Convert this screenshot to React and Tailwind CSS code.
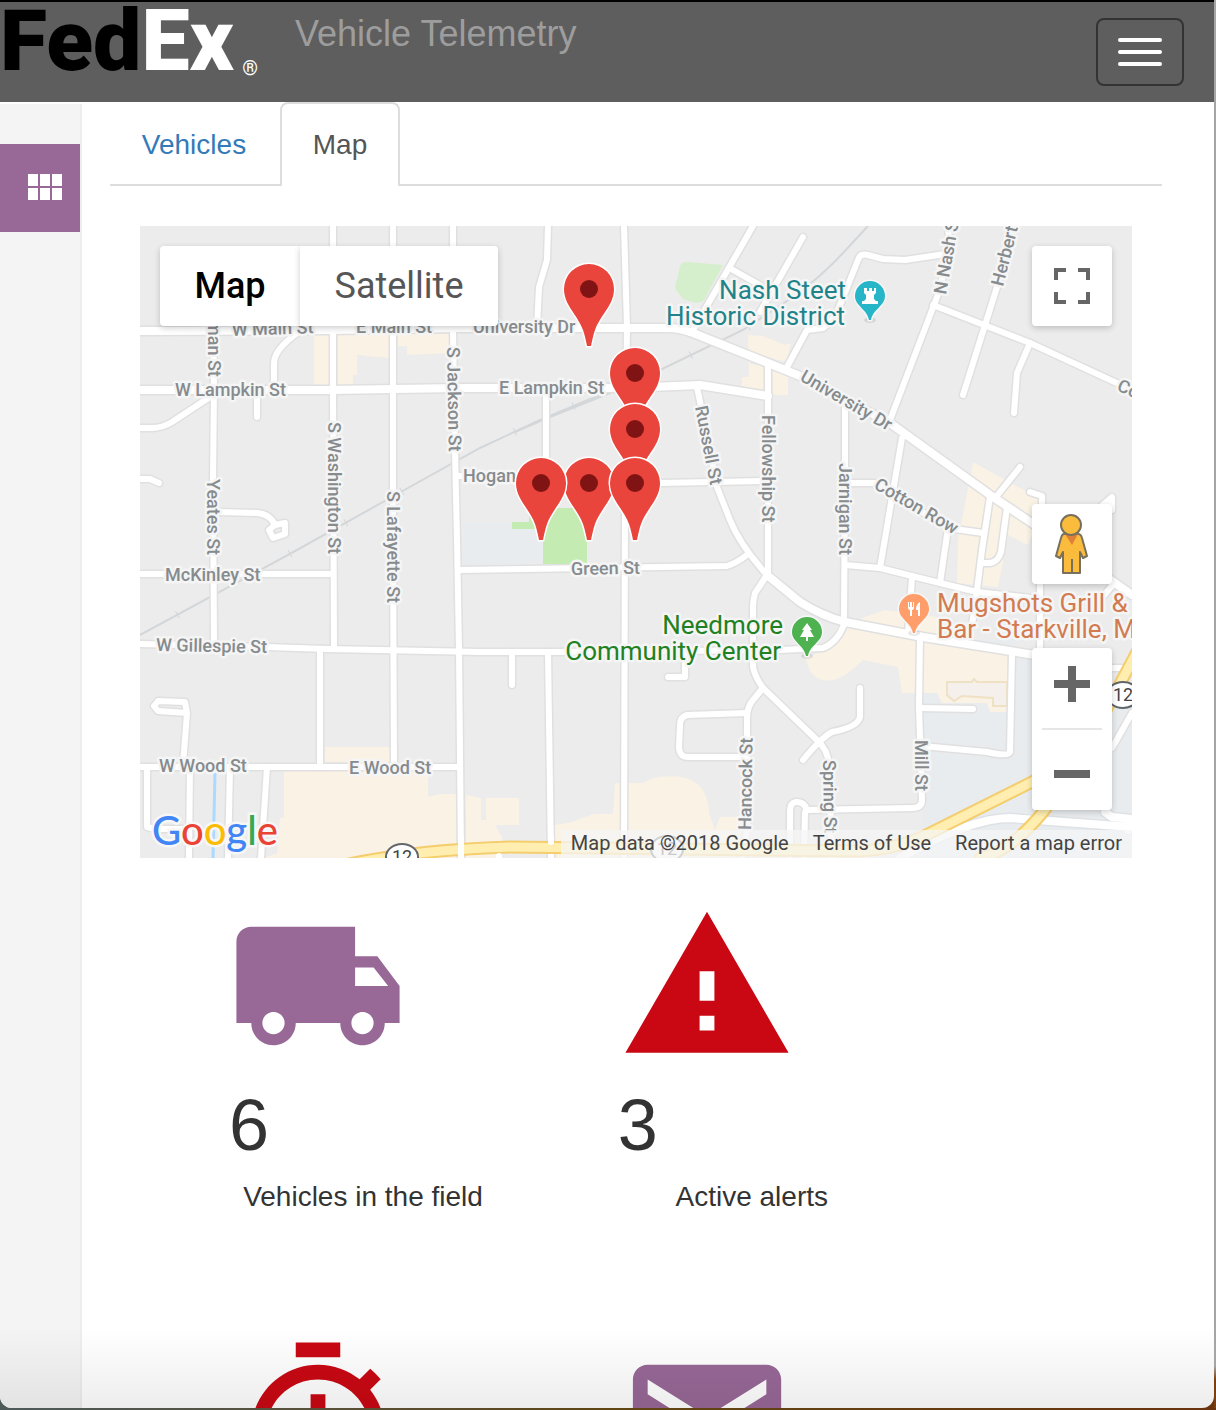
import React from "react";

const minorRoads = [
  "M140 428H152Q162 428 172 422L210 397",
  "M213 320L214 390L213 480L214 643",
  "M333 226V390L334 648",
  "M393 226V540L394 768",
  "M453 226V330L455 450L457 540L459 650L461 858",
  "M548 226L547 260L539 287L537 327",
  "M624 226L627 327L625 500L624 858",
  "M546 393V480",
  "M297 333Q274 350 274 363V388",
  "M257 398V417",
  "M140 479H150L159 483",
  "M218 512L257 513Q270 514 275 525L285 523V534L273 538L269 530L275 525",
  "M457 476H541",
  "M635 484L660 483L767 481",
  "M697 387L712 460L717 487L730 520Q740 545 767 575",
  "M768 363V575",
  "M753 226L693 330",
  "M733 270L763 287",
  "M803 237L760 312",
  "M787 367L807 330L823 328Q834 320 840 305L858 260Q860 253 868 255L883 259L905 260L945 254",
  "M948 226L950 252L937 297L890 420",
  "M933 305L1030 343L1132 390",
  "M1012 226L997 287L963 395",
  "M1030 343L1017 373L1014 413",
  "M902 438L880 568",
  "M845 400V473L844 622",
  "M850 483H876L948 528L983 533",
  "M948 528L940 583",
  "M990 497L982 550L977 590L972 625",
  "M1007 507L1001 552Q998 562 990 563H981",
  "M1020 467L996 497",
  "M1030 492L1042 496V505",
  "M1098 509L1112 497V510",
  "M140 574H333",
  "M458 570L727 566Q737 563 748 554",
  "M140 644L267 647L327 649L480 652L548 652L780 650L823 648Q838 642 845 622",
  "M845 565L880 568L940 583L977 592L1040 599",
  "M1040 583V655",
  "M912 578L908 633",
  "M920 637L919 707L922 800Q922 808 912 808L807 810Q804 801 796 802Q790 803 790 811V858",
  "M805 812L804 858",
  "M921 708L973 709",
  "M1012 653L1010 752Q1008 757 987 752L922 746",
  "M860 688V717Q858 727 832 732Q822 737 803 760",
  "M763 688L817 740Q828 750 829 765L832 858",
  "M767 575L755 593Q753 600 753 607V667Q755 677 763 688",
  "M763 688L753 700Q747 707 747 718V830L742 858",
  "M747 713L687 715Q680 717 680 725L679 748Q680 757 688 757H747",
  "M685 655V677H668",
  "M512 652V685",
  "M548 652L551 858",
  "M320 649V767",
  "M183 765L187 713L185 702L158 701L154 706L158 711L187 713",
  "M140 767H460",
  "M147 767V827L155 829H186",
  "M190 767L189 858",
  "M230 767L228 858",
  "M267 767L261 858",
  "M1132 713L1112 748",
  "M1100 600L1115 582",
  "M1108 668H1132",
];

const mainRoads = [
  "M140 331L330 330L460 328H668Q680 328 693 333L768 363L800 376L890 423L993 497L1032 523L1115 583L1132 595",
  "M140 390H330L460 388H625L700 385L768 396",
  "M767 575L800 602Q822 616 845 622L923 637L1035 655",
];

const commercial = [
  "M314 332H332V385H314Z",
  "M338 332H389V358L357 355V375H353V385H338Z",
  "M398 333H449V353L407 355V346H398Z",
  "M748 335L763 336L785 345L791 343L786 362L768 357L750 352V364L766 366V393L742 388V377H749Z",
  "M772 368L788 372V395H772Z",
  "M973 462L1038 498V520L1028 545L1008 535L998 587L957 583L958 540Z",
  "M837 627L885 610L937 617L940 637L1010 655L1007 712H990L987 703H942L937 693H902L898 667L863 660Q840 684 822 680Q808 676 806 658L830 648Z",
  "M325 747H390V762H325Z",
  "M284 770H428V797L440 794H457V858H265L277 853L280 818H284Z",
  "M466 795L481 798V820H486V798H519V825H495L502 837V858H466Z",
  "M555 825L572 822L593 814H613L615 783H643Q655 774 682 777Q708 782 709 813L715 830L720 817H742V858H555Z",
];

const flatLabels = [
  ["W Main St", 232, 336, -2],
  ["E Main St", 356, 333, 0],
  ["University Dr", 473, 333, 0],
  ["W Lampkin St", 175, 396, 0],
  ["E Lampkin St", 499, 394, 0],
  ["Hogan", 463, 482, 0],
  ["Green St", 571, 575, -1],
  ["McKinley St", 165, 581, 0],
  ["W Gillespie St", 156, 651, 1],
  ["W Wood St", 159, 772, 0],
  ["E Wood St", 349, 774, 0],
  ["man St", 208, 320, 90],
  ["S Jackson St", 447, 347, 89],
  ["S Washington St", 328, 422, 90],
  ["Yeates St", 207, 479, 90],
  ["S Lafayette St", 387, 491, 90],
  ["Russell St", 695, 407, 79],
  ["Fellowship St", 762, 415, 90],
  ["Jarnigan St", 839, 463, 90],
  ["Mill St", 915, 740, 90],
  ["Spring St", 823, 760, 89],
  ["Hancock St", 751, 830, -89],
  ["N Nash St", 946, 295, -80],
  ["Herbert", 1003, 287, -76],
  ["University Dr", 799, 380, 30],
  ["Cotton Row", 873, 488, 30],
  ["Colonel", 1116, 390, 24],
];

const vehiclePins = [
  [589, 289],
  [635, 373],
  [635, 429],
  [589, 483],
  [541, 483],
  [635, 483],
];

function VehiclePin({ x, y }) {
  return (
    <g transform={`translate(${x} ${y})`}>
      <path
        d="M-25 0A25 25 0 0 1 25 0C25 16 12 25 6 41C4 47 3 52 2 57H-2C-3 52 -4 47 -6 41C-12 25 -25 16 -25 0Z"
        fill="#e9453c"
        stroke="#fff"
        strokeWidth="3"
        paintOrder="stroke"
      />
      <circle r="9" fill="#801414" />
    </g>
  );
}

function PlacePin({ x, y, fill, children }) {
  return (
    <g transform={`translate(${x} ${y})`}>
      <ellipse cx="0" cy="24" rx="6" ry="3" fill="#00000018" />
      <path
        d="M-15 0A15 15 0 0 1 15 0C15 10 3 13 1 24H-1C-3 13 -15 10 -15 0Z"
        fill={fill}
        stroke="#f7f7f7"
        strokeWidth="3"
        paintOrder="stroke"
      />
      {children}
    </g>
  );
}

function RouteShield({ x, y }) {
  return (
    <g>
      <ellipse cx={x} cy={y} rx="16" ry="13" fill="#fff" stroke="#61666a" strokeWidth="2" />
      <text x={x} y={y + 6} textAnchor="middle" fontSize="18" fill="#444">
        12
      </text>
    </g>
  );
}

function StreetMap() {
  return (
    <svg
      viewBox="140 226 992 632"
      preserveAspectRatio="xMidYMid slice"
      className="block h-full w-full font-[Roboto,sans-serif]"
      role="img"
      aria-label="Street map with vehicle locations"
    >
      <rect x="140" y="226" width="992" height="632" fill="#ececec" />
      <path d="M463 522H543V563L462 566Z" fill="#e8ecef" />
      <path d="M922 640L1132 640V858H880L922 840Z" fill="#e8ecef" />
      <path d="M1015 600H1132V650L1110 690H1032V655L1015 650Z" fill="#ececec" />
      {commercial.map((d) => (
        <path key={d} d={d} fill="#faf2e5" />
      ))}
      <path
        d="M947 682H972L974 679L977 682H1007V706H993V698L962 696L954 701L947 695Z"
        fill="#f5f0eb"
        stroke="#efe1c4"
        strokeWidth="2"
      />
      <path d="M687 262L723 265L704 300Q700 304 693 302L683 299L675 288L680 266Q682 262 687 262Z" fill="#d5eecb" />
      <path d="M512 522H529V515L543 508H580L587 540V564H543V529H512Z" fill="#c3ebb2" />
      <path d="M215 773L213 858" stroke="#aadaff" strokeWidth="3" />

      <g fill="none" stroke="#d4d7da" strokeWidth="2">
        <path d="M140 635L297 550L390 498L480 448L540 420L660 370L743 330L793 297Q822 276 843 253L868 226" />
        <path d="M515 432L545 419L615 391" />
        <path
          strokeWidth="8"
          strokeDasharray="1 63"
          d="M177 615L297 550L390 498L480 448L540 420L660 370L743 330L793 297L843 253"
        />
      </g>

      <g fill="none" strokeLinecap="round" strokeLinejoin="round">
        <g stroke="#e0e0e0" strokeWidth="9">
          {minorRoads.map((d) => (
            <path key={d} d={d} />
          ))}
        </g>
        <g stroke="#e0e0e0" strokeWidth="11">
          {mainRoads.map((d) => (
            <path key={d} d={d} />
          ))}
        </g>
        <g stroke="#fff" strokeWidth="6">
          {minorRoads.map((d) => (
            <path key={d} d={d} />
          ))}
        </g>
        <g stroke="#fff" strokeWidth="8">
          {mainRoads.map((d) => (
            <path key={d} d={d} />
          ))}
        </g>
        <path
          d="M900 858Q970 818 1010 818L1132 827M1105 812L1112 817L1132 819M1128 819V830"
          stroke="#dfe2e5"
          strokeWidth="11"
        />
        <path
          d="M900 858Q970 818 1010 818L1132 827M1105 812L1112 817L1132 819M1128 819V830"
          stroke="#fff"
          strokeWidth="8"
        />
        <path
          d="M340 866Q410 850 510 847L860 851Q890 850 920 838L1032 782Q1085 750 1105 712L1138 650M980 858Q1010 852 1043 812L1075 770"
          stroke="#f4cd6c"
          strokeWidth="13"
        />
        <path
          d="M340 866Q410 850 510 847L860 851Q890 850 920 838L1032 782Q1085 750 1105 712L1138 650M980 858Q1010 852 1043 812L1075 770"
          stroke="#ffeeb0"
          strokeWidth="9"
        />
        <path d="M461 838V858M551 838V842M499 856V862" stroke="#fff" strokeWidth="6" />
      </g>

      <RouteShield x={402} y={857} />
      <RouteShield x={667} y={849} />
      <RouteShield x={1123} y={695} />

      <g
        fontSize="18"
        fontWeight="500"
        fill="#868b8e"
        stroke="#f5f5f5"
        strokeWidth="5"
        strokeLinejoin="round"
        paintOrder="stroke"
      >
        {flatLabels.map(([label, x, y, angle]) => (
          <text key={label + x} transform={`translate(${x} ${y}) rotate(${angle})`}>
            {label}
          </text>
        ))}
      </g>

      <g fontSize="26" stroke="#f5f5f5" strokeWidth="5" strokeLinejoin="round" paintOrder="stroke">
        <text x="846" y="299" textAnchor="end" fill="#1f8389">Nash Steet</text>
        <text x="845" y="325" textAnchor="end" fill="#1f8389">Historic District</text>
        <text x="783" y="634" textAnchor="end" fill="#1f8121">Needmore</text>
        <text x="781" y="660" textAnchor="end" fill="#1f8121">Community Center</text>
        <text x="937" y="612" fill="#d27b50">{"Mugshots Grill &"}</text>
        <text x="937" y="638" fill="#d27b50">Bar - Starkville, MS</text>
      </g>

      <PlacePin x={870} y={296} fill="#27b5c8">
        <path d="M-6 -8H-3V-5H-1V-8H2V-5H4V-8H6V-3L4 -1V3L6 5H8V8H-8V5H-6L-4 3V-1L-6 -3Z" fill="#fff" />
      </PlacePin>
      <PlacePin x={914} y={609} fill="#ff9e6b">
        <path d="M-6 -7V-2Q-6 1 -4 1V7H-2V1Q0 1 0 -2V-7H-1V-2H-2V-7H-4V-2H-5V-7ZM6 -7Q2 -5 2 1H4V7H6Z" fill="#fff" />
      </PlacePin>
      <PlacePin x={807} y={632} fill="#4eb250">
        <path d="M0 -9L5 -2H3L7 5H1V9H-1V5H-7L-3 -2H-5Z" fill="#fff" />
      </PlacePin>

      {vehiclePins.map(([x, y]) => (
        <VehiclePin key={`${x}-${y}`} x={x} y={y} />
      ))}
    </svg>
  );
}

function MapPanel() {
  const control = "bg-white shadow-[0_2px_6px_rgba(0,0,0,0.2)]";
  return (
    <div className="relative h-[632px] overflow-hidden font-[Roboto,sans-serif]">
      <StreetMap />

      <div className="absolute left-5 top-5 flex h-20 text-4xl">
        <button type="button" className={`${control} w-[140px] rounded-l-sm font-medium text-black`}>
          Map
        </button>
        <button type="button" className={`${control} w-[198px] rounded-r-sm text-[#565656]`}>
          Satellite
        </button>
      </div>

      <button
        type="button"
        aria-label="Toggle fullscreen view"
        className={`${control} absolute right-5 top-5 grid size-20 place-items-center rounded`}
      >
        <svg viewBox="0 0 36 36" className="size-9" fill="none" stroke="#666" strokeWidth="4">
          <path d="M2 12V2H12M24 2H34V12M34 24V34H24M12 34H2V24" />
        </svg>
      </button>

      <div className="absolute bottom-12 right-5 flex flex-col gap-16">
        <button
          type="button"
          aria-label="Street View"
          className={`${control} grid size-20 place-items-center rounded`}
        >
          <svg viewBox="0 0 36 60" className="h-[60px] w-9" stroke="#77705c" strokeWidth="2" strokeLinejoin="round">
            <path
              d="M10 20H24Q27 20 28 24L33 42L29 44L26 38V59H9V38L6 44L2 42L7 24Q8 20 10 20Z"
              fill="#fbbc3d"
            />
            <path d="M11 20H24L18 31Z" fill="#de8038" stroke="none" />
            <path d="M18 45V59" />
            <circle cx="17" cy="11" r="10" fill="#fbbc3d" />
          </svg>
        </button>
        <div className={`${control} flex h-[162px] flex-col items-center rounded`}>
          <button type="button" aria-label="Zoom in" className="grid w-20 flex-1 place-items-center">
            <svg viewBox="0 0 36 36" className="mb-2 size-9" stroke="#666" strokeWidth="8">
              <path d="M0 18H36M18 0V36" />
            </svg>
          </button>
          <div className="h-0.5 w-[60px] bg-[#e6e6e6]" />
          <button type="button" aria-label="Zoom out" className="grid w-20 flex-1 place-items-center">
            <svg viewBox="0 0 36 36" className="mt-2 size-9" stroke="#666" strokeWidth="8">
              <path d="M0 18H36" />
            </svg>
          </button>
        </div>
      </div>

      <a
        href="#google"
        className="absolute bottom-1 left-3 font-[Lato,sans-serif] text-[40px] font-medium leading-[48px] [-webkit-text-stroke:5px_#f7f7f7] [paint-order:stroke]"
      >
        <span className="text-[#4285f4]">G</span>
        <span className="text-[#ea4335]">o</span>
        <span className="text-[#fbbc05]">o</span>
        <span className="text-[#4285f4]">g</span>
        <span className="text-[#34a853]">l</span>
        <span className="text-[#ea4335]">e</span>
      </a>

      <div className="absolute bottom-0 right-0 flex h-7 items-start gap-6 bg-[#f5f5f5]/75 px-2.5 text-xl leading-[26px] text-[#444]">
        <span>Map data ©2018 Google</span>
        <a href="#terms">Terms of Use</a>
        <a href="#report">Report a map error</a>
      </div>
    </div>
  );
}

const icons = {
  truck:
    "M20 8h-3V4H3c-1.1 0-2 .9-2 2v11h2c0 1.66 1.34 3 3 3s3-1.34 3-3h6c0 1.66 1.34 3 3 3s3-1.34 3-3h2v-5l-3-4zM6 18.5c-.83 0-1.5-.67-1.5-1.5s.67-1.5 1.5-1.5 1.5.67 1.5 1.5-.67 1.5-1.5 1.5zm13.5-9l1.96 2.5H17V9.5h2.5zm-1.5 9c-.83 0-1.5-.67-1.5-1.5s.67-1.5 1.5-1.5 1.5.67 1.5 1.5-.67 1.5-1.5 1.5z",
  warning: "M1 21h22L12 2 1 21zm12-3h-2v-2h2v2zm0-4h-2v-4h2v4z",
  timer:
    "M15 1H9v2h6V1zm-4 13h2V8h-2v6zm8.03-6.61l1.42-1.42c-.43-.51-.9-.99-1.41-1.41l-1.42 1.42C16.07 4.74 14.12 4 12 4c-4.97 0-9 4.03-9 9s4.02 9 9 9 9-4.03 9-9c0-2.12-.74-4.07-1.97-5.61zM12 20c-3.87 0-7-3.13-7-7s3.13-7 7-7 7 3.13 7 7-3.13 7-7 7z",
  mail: "M20 4H4c-1.1 0-1.99.9-1.99 2L2 18c0 1.1.9 2 2 2h16c1.1 0 2-.9 2-2V6c0-1.1-.9-2-2-2zm0 4l-8 5-8-5V6l8 5 8-5v2z",
  grid: "M4 11h5V5H4v6zm0 7h5v-6H4v6zm6 0h5v-6h-5v6zm6 0h5v-6h-5v6zm-6-7h5V5h-5v6zm6-6v6h5V5h-5z",
};

function Stat({ icon, color, value, label }) {
  return (
    <section className="h-[438px]">
      <svg viewBox="0 0 24 24" className={`block size-[178px] ${color}`} fill="currentColor" aria-hidden="true">
        <path d={icons[icon]} />
      </svg>
      {value && (
        <>
          <p className="mt-2.5 text-[72px] leading-20">{value}</p>
          <p className="mt-3 w-[268px] text-center text-[28px] leading-10">{label}</p>
        </>
      )}
    </section>
  );
}

export default function App() {
  return (
    <div className="h-screen bg-linear-to-r from-[#4d5a5a] via-[#5f4612] to-[#6a3310] pb-0.5 font-['Liberation_Sans',Arial,sans-serif] text-[#333]">
      <div className="h-full bg-[linear-gradient(#a5a5a5_97%,#7a3f10_98%)] bg-[length:2px_100%] bg-right bg-no-repeat pr-0.5">
        <div className="relative flex h-full flex-col overflow-hidden rounded-b-xl bg-white">
          <header className="flex h-[102px] shrink-0 items-start border-t-2 border-black bg-[#5e5e5e] pr-[30px]">
            <a
              href="#home"
              aria-label="FedEx home"
              className="flex h-20 w-[258px] items-end justify-between font-[Roboto,sans-serif] text-[86px] font-black leading-[82px] text-white"
            >
              <span>
                <span className="text-black">Fed</span>Ex
              </span>
              <span className="pb-0.5 text-xl font-normal leading-6">®</span>
            </a>
            <h1 className="ml-[37px] mt-3 text-4xl leading-10 text-[#9d9d9d]">Vehicle Telemetry</h1>
            <button
              type="button"
              aria-label="Toggle navigation"
              className="ml-auto mt-4 flex h-[68px] w-[88px] flex-col items-center justify-center gap-2 rounded-lg border-2 border-[#333]"
            >
              <span className="h-1 w-11 rounded-xs bg-white" />
              <span className="h-1 w-11 rounded-xs bg-white" />
              <span className="h-1 w-11 rounded-xs bg-white" />
            </button>
          </header>

          <div className="flex min-h-0 flex-1">
            <nav className="mt-0.5 w-[82px] shrink-0 border-r-2 border-[#eee] bg-[#f4f4f4] pt-10">
              <a href="#dashboard" aria-label="Dashboard" className="flex h-[88px] items-center bg-[#986897] pl-5">
                <svg viewBox="0 0 24 24" className="size-12" fill="#fff">
                  <path d={icons.grid} />
                </svg>
              </a>
            </nav>

            <main className="min-w-0 flex-1 pl-7 pr-[52px]">
              <div role="tablist" className="flex h-[84px] border-b-2 border-[#ddd] text-[28px] leading-10">
                <button
                  type="button"
                  role="tab"
                  aria-selected="false"
                  className="-mb-0.5 w-[170px] border-t-2 border-transparent pr-0.5 text-center text-[#337ab7]"
                >
                  Vehicles
                </button>
                <button
                  type="button"
                  role="tab"
                  aria-selected="true"
                  className="-mb-0.5 w-[120px] rounded-t-lg border-2 border-b-0 border-[#ddd] bg-white text-center text-[#555]"
                >
                  Map
                </button>
              </div>

              <div className="px-[30px] pt-10">
                <MapPanel />
              </div>

              <div className="grid grid-cols-[5fr_5fr_2fr] pl-[119px] pt-[39px]">
                <Stat icon="truck" color="text-[#986897]" value="6" label="Vehicles in the field" />
                <Stat icon="warning" color="text-[#c90813]" value="3" label="Active alerts" />
                <div />
                <Stat icon="timer" color="text-[#c90813]" />
                <Stat icon="mail" color="text-[#986897]" />
              </div>
            </main>
          </div>
          <div className="pointer-events-none absolute inset-x-0 bottom-0 h-20 bg-linear-to-b from-transparent to-black/7" />
        </div>
      </div>
    </div>
  );
}
